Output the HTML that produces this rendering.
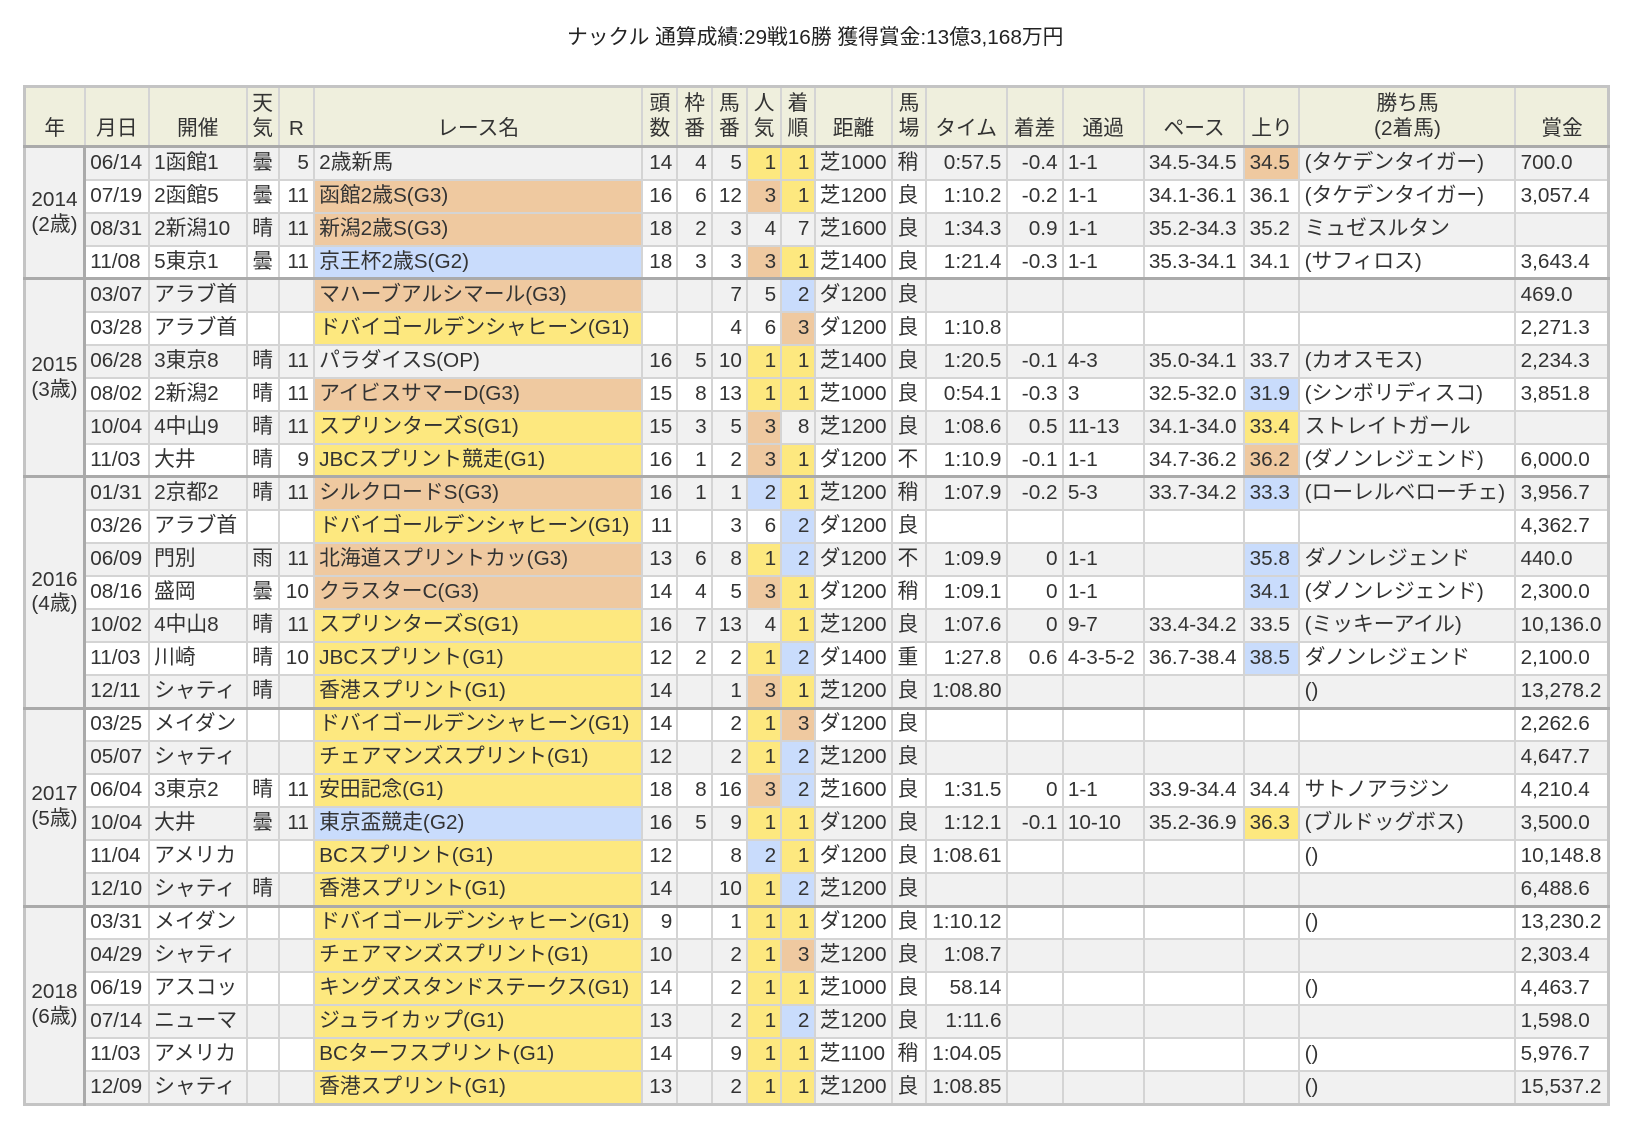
<!DOCTYPE html>
<html><head><meta charset="utf-8"><style>
body{margin:0;background:#fff;font-family:"Liberation Sans","Noto Sans CJK JP",sans-serif;color:#333;zoom:1.0385}
h1{font-size:20px;font-weight:normal;margin:0;position:absolute;top:19px;left:22px;width:1526px;text-align:center;color:#222}
table{position:absolute;top:82px;left:22px;width:1526px;table-layout:fixed;border-collapse:collapse;font-size:20px;border:3px solid #c4c4c4}
td,th{border:2px solid #d4d4d4;padding:0 4px;white-space:nowrap;overflow:hidden;line-height:22px;text-align:left}
th{background:#efefdd;font-weight:normal;text-align:center;vertical-align:bottom;height:52px;padding-bottom:3px;line-height:24px}
tr{height:31.8px}
tbody tr:nth-child(odd) td{background:#f1f1f1}
tbody tr:nth-child(even) td{background:#fff}
tr.f td{border-top:3px solid #aaa}
td.yr{background:#f1f1f1!important;text-align:center;line-height:24px;border-right:3px solid #aaa}
tr.f td:nth-child(5),tr.f td:nth-child(7),tr.f td:nth-child(8),tr.f td:nth-child(9),tr.f td:nth-child(10),tr.f td:nth-child(11),tr.f td:nth-child(14),tr.f td:nth-child(15){text-align:right}
tr:not(.f) td:nth-child(4),tr:not(.f) td:nth-child(6),tr:not(.f) td:nth-child(7),tr:not(.f) td:nth-child(8),tr:not(.f) td:nth-child(9),tr:not(.f) td:nth-child(10),tr:not(.f) td:nth-child(13),tr:not(.f) td:nth-child(14){text-align:right}
tr.f td:nth-child(4),tr:not(.f) td:nth-child(3){text-align:center}
tbody tr td.y{background:#fde87f}
tbody tr td.o{background:#efc9a0}
tbody tr td.b{background:#c9dcfc}
</style></head><body>
<h1>ナックル 通算成績:29戦16勝 獲得賞金:13億3,168万円</h1>
<table>
<colgroup><col style="width:58px"><col style="width:62px"><col style="width:94px"><col style="width:31px"><col style="width:34px"><col style="width:316px"><col style="width:34px"><col style="width:33px"><col style="width:34px"><col style="width:33px"><col style="width:32px"><col style="width:75px"><col style="width:32px"><col style="width:78px"><col style="width:54px"><col style="width:78px"><col style="width:97px"><col style="width:53px"><col style="width:208px"><col style="width:90px"></colgroup>
<thead><tr><th>年</th><th>月日</th><th>開催</th><th>天<br>気</th><th>R</th><th>レース名</th><th>頭<br>数</th><th>枠<br>番</th><th>馬<br>番</th><th>人<br>気</th><th>着<br>順</th><th>距離</th><th>馬<br>場</th><th>タイム</th><th>着差</th><th>通過</th><th>ペース</th><th>上り</th><th>勝ち馬<br>(2着馬)</th><th>賞金</th></tr></thead>
<tbody>
<tr class="f"><td class="yr" rowspan="4">2014<br>(2歳)</td><td>06/14</td><td>1函館1</td><td>曇</td><td>5</td><td>2歳新馬</td><td>14</td><td>4</td><td>5</td><td class="y">1</td><td class="y">1</td><td>芝1000</td><td>稍</td><td>0:57.5</td><td>-0.4</td><td>1-1</td><td>34.5-34.5</td><td class="o">34.5</td><td>(タケデンタイガー)</td><td>700.0</td></tr>
<tr><td>07/19</td><td>2函館5</td><td>曇</td><td>11</td><td class="o">函館2歳S(G3)</td><td>16</td><td>6</td><td>12</td><td class="o">3</td><td class="y">1</td><td>芝1200</td><td>良</td><td>1:10.2</td><td>-0.2</td><td>1-1</td><td>34.1-36.1</td><td>36.1</td><td>(タケデンタイガー)</td><td>3,057.4</td></tr>
<tr><td>08/31</td><td>2新潟10</td><td>晴</td><td>11</td><td class="o">新潟2歳S(G3)</td><td>18</td><td>2</td><td>3</td><td>4</td><td>7</td><td>芝1600</td><td>良</td><td>1:34.3</td><td>0.9</td><td>1-1</td><td>35.2-34.3</td><td>35.2</td><td>ミュゼスルタン</td><td></td></tr>
<tr><td>11/08</td><td>5東京1</td><td>曇</td><td>11</td><td class="b">京王杯2歳S(G2)</td><td>18</td><td>3</td><td>3</td><td class="o">3</td><td class="y">1</td><td>芝1400</td><td>良</td><td>1:21.4</td><td>-0.3</td><td>1-1</td><td>35.3-34.1</td><td>34.1</td><td>(サフィロス)</td><td>3,643.4</td></tr>
<tr class="f"><td class="yr" rowspan="6">2015<br>(3歳)</td><td>03/07</td><td>アラブ首</td><td></td><td></td><td class="o">マハーブアルシマール(G3)</td><td></td><td></td><td>7</td><td>5</td><td class="b">2</td><td>ダ1200</td><td>良</td><td></td><td></td><td></td><td></td><td></td><td></td><td>469.0</td></tr>
<tr><td>03/28</td><td>アラブ首</td><td></td><td></td><td class="y">ドバイゴールデンシャヒーン(G1)</td><td></td><td></td><td>4</td><td>6</td><td class="o">3</td><td>ダ1200</td><td>良</td><td>1:10.8</td><td></td><td></td><td></td><td></td><td></td><td>2,271.3</td></tr>
<tr><td>06/28</td><td>3東京8</td><td>晴</td><td>11</td><td>パラダイスS(OP)</td><td>16</td><td>5</td><td>10</td><td class="y">1</td><td class="y">1</td><td>芝1400</td><td>良</td><td>1:20.5</td><td>-0.1</td><td>4-3</td><td>35.0-34.1</td><td>33.7</td><td>(カオスモス)</td><td>2,234.3</td></tr>
<tr><td>08/02</td><td>2新潟2</td><td>晴</td><td>11</td><td class="o">アイビスサマーD(G3)</td><td>15</td><td>8</td><td>13</td><td class="y">1</td><td class="y">1</td><td>芝1000</td><td>良</td><td>0:54.1</td><td>-0.3</td><td>3</td><td>32.5-32.0</td><td class="b">31.9</td><td>(シンボリディスコ)</td><td>3,851.8</td></tr>
<tr><td>10/04</td><td>4中山9</td><td>晴</td><td>11</td><td class="y">スプリンターズS(G1)</td><td>15</td><td>3</td><td>5</td><td class="o">3</td><td>8</td><td>芝1200</td><td>良</td><td>1:08.6</td><td>0.5</td><td>11-13</td><td>34.1-34.0</td><td class="y">33.4</td><td>ストレイトガール</td><td></td></tr>
<tr><td>11/03</td><td>大井</td><td>晴</td><td>9</td><td class="y">JBCスプリント競走(G1)</td><td>16</td><td>1</td><td>2</td><td class="o">3</td><td class="y">1</td><td>ダ1200</td><td>不</td><td>1:10.9</td><td>-0.1</td><td>1-1</td><td>34.7-36.2</td><td class="o">36.2</td><td>(ダノンレジェンド)</td><td>6,000.0</td></tr>
<tr class="f"><td class="yr" rowspan="7">2016<br>(4歳)</td><td>01/31</td><td>2京都2</td><td>晴</td><td>11</td><td class="o">シルクロードS(G3)</td><td>16</td><td>1</td><td>1</td><td class="b">2</td><td class="y">1</td><td>芝1200</td><td>稍</td><td>1:07.9</td><td>-0.2</td><td>5-3</td><td>33.7-34.2</td><td class="b">33.3</td><td>(ローレルベローチェ)</td><td>3,956.7</td></tr>
<tr><td>03/26</td><td>アラブ首</td><td></td><td></td><td class="y">ドバイゴールデンシャヒーン(G1)</td><td>11</td><td></td><td>3</td><td>6</td><td class="b">2</td><td>ダ1200</td><td>良</td><td></td><td></td><td></td><td></td><td></td><td></td><td>4,362.7</td></tr>
<tr><td>06/09</td><td>門別</td><td>雨</td><td>11</td><td class="o">北海道スプリントカッ(G3)</td><td>13</td><td>6</td><td>8</td><td class="y">1</td><td class="b">2</td><td>ダ1200</td><td>不</td><td>1:09.9</td><td>0</td><td>1-1</td><td></td><td class="b">35.8</td><td>ダノンレジェンド</td><td>440.0</td></tr>
<tr><td>08/16</td><td>盛岡</td><td>曇</td><td>10</td><td class="o">クラスターC(G3)</td><td>14</td><td>4</td><td>5</td><td class="o">3</td><td class="y">1</td><td>ダ1200</td><td>稍</td><td>1:09.1</td><td>0</td><td>1-1</td><td></td><td class="b">34.1</td><td>(ダノンレジェンド)</td><td>2,300.0</td></tr>
<tr><td>10/02</td><td>4中山8</td><td>晴</td><td>11</td><td class="y">スプリンターズS(G1)</td><td>16</td><td>7</td><td>13</td><td>4</td><td class="y">1</td><td>芝1200</td><td>良</td><td>1:07.6</td><td>0</td><td>9-7</td><td>33.4-34.2</td><td>33.5</td><td>(ミッキーアイル)</td><td>10,136.0</td></tr>
<tr><td>11/03</td><td>川崎</td><td>晴</td><td>10</td><td class="y">JBCスプリント(G1)</td><td>12</td><td>2</td><td>2</td><td class="y">1</td><td class="b">2</td><td>ダ1400</td><td>重</td><td>1:27.8</td><td>0.6</td><td>4-3-5-2</td><td>36.7-38.4</td><td class="b">38.5</td><td>ダノンレジェンド</td><td>2,100.0</td></tr>
<tr><td>12/11</td><td>シャティ</td><td>晴</td><td></td><td class="y">香港スプリント(G1)</td><td>14</td><td></td><td>1</td><td class="o">3</td><td class="y">1</td><td>芝1200</td><td>良</td><td>1:08.80</td><td></td><td></td><td></td><td></td><td>()</td><td>13,278.2</td></tr>
<tr class="f"><td class="yr" rowspan="6">2017<br>(5歳)</td><td>03/25</td><td>メイダン</td><td></td><td></td><td class="y">ドバイゴールデンシャヒーン(G1)</td><td>14</td><td></td><td>2</td><td class="y">1</td><td class="o">3</td><td>ダ1200</td><td>良</td><td></td><td></td><td></td><td></td><td></td><td></td><td>2,262.6</td></tr>
<tr><td>05/07</td><td>シャティ</td><td></td><td></td><td class="y">チェアマンズスプリント(G1)</td><td>12</td><td></td><td>2</td><td class="y">1</td><td class="b">2</td><td>芝1200</td><td>良</td><td></td><td></td><td></td><td></td><td></td><td></td><td>4,647.7</td></tr>
<tr><td>06/04</td><td>3東京2</td><td>晴</td><td>11</td><td class="y">安田記念(G1)</td><td>18</td><td>8</td><td>16</td><td class="o">3</td><td class="b">2</td><td>芝1600</td><td>良</td><td>1:31.5</td><td>0</td><td>1-1</td><td>33.9-34.4</td><td>34.4</td><td>サトノアラジン</td><td>4,210.4</td></tr>
<tr><td>10/04</td><td>大井</td><td>曇</td><td>11</td><td class="b">東京盃競走(G2)</td><td>16</td><td>5</td><td>9</td><td class="y">1</td><td class="y">1</td><td>ダ1200</td><td>良</td><td>1:12.1</td><td>-0.1</td><td>10-10</td><td>35.2-36.9</td><td class="y">36.3</td><td>(ブルドッグボス)</td><td>3,500.0</td></tr>
<tr><td>11/04</td><td>アメリカ</td><td></td><td></td><td class="y">BCスプリント(G1)</td><td>12</td><td></td><td>8</td><td class="b">2</td><td class="y">1</td><td>ダ1200</td><td>良</td><td>1:08.61</td><td></td><td></td><td></td><td></td><td>()</td><td>10,148.8</td></tr>
<tr><td>12/10</td><td>シャティ</td><td>晴</td><td></td><td class="y">香港スプリント(G1)</td><td>14</td><td></td><td>10</td><td class="y">1</td><td class="b">2</td><td>芝1200</td><td>良</td><td></td><td></td><td></td><td></td><td></td><td></td><td>6,488.6</td></tr>
<tr class="f"><td class="yr" rowspan="6">2018<br>(6歳)</td><td>03/31</td><td>メイダン</td><td></td><td></td><td class="y">ドバイゴールデンシャヒーン(G1)</td><td>9</td><td></td><td>1</td><td class="y">1</td><td class="y">1</td><td>ダ1200</td><td>良</td><td>1:10.12</td><td></td><td></td><td></td><td></td><td>()</td><td>13,230.2</td></tr>
<tr><td>04/29</td><td>シャティ</td><td></td><td></td><td class="y">チェアマンズスプリント(G1)</td><td>10</td><td></td><td>2</td><td class="y">1</td><td class="o">3</td><td>芝1200</td><td>良</td><td>1:08.7</td><td></td><td></td><td></td><td></td><td></td><td>2,303.4</td></tr>
<tr><td>06/19</td><td>アスコッ</td><td></td><td></td><td class="y">キングズスタンドステークス(G1)</td><td>14</td><td></td><td>2</td><td class="y">1</td><td class="y">1</td><td>芝1000</td><td>良</td><td>58.14</td><td></td><td></td><td></td><td></td><td>()</td><td>4,463.7</td></tr>
<tr><td>07/14</td><td>ニューマ</td><td></td><td></td><td class="y">ジュライカップ(G1)</td><td>13</td><td></td><td>2</td><td class="y">1</td><td class="b">2</td><td>芝1200</td><td>良</td><td>1:11.6</td><td></td><td></td><td></td><td></td><td></td><td>1,598.0</td></tr>
<tr><td>11/03</td><td>アメリカ</td><td></td><td></td><td class="y">BCターフスプリント(G1)</td><td>14</td><td></td><td>9</td><td class="y">1</td><td class="y">1</td><td>芝1100</td><td>稍</td><td>1:04.05</td><td></td><td></td><td></td><td></td><td>()</td><td>5,976.7</td></tr>
<tr><td>12/09</td><td>シャティ</td><td></td><td></td><td class="y">香港スプリント(G1)</td><td>13</td><td></td><td>2</td><td class="y">1</td><td class="y">1</td><td>芝1200</td><td>良</td><td>1:08.85</td><td></td><td></td><td></td><td></td><td>()</td><td>15,537.2</td></tr>
</tbody></table>
</body></html>
